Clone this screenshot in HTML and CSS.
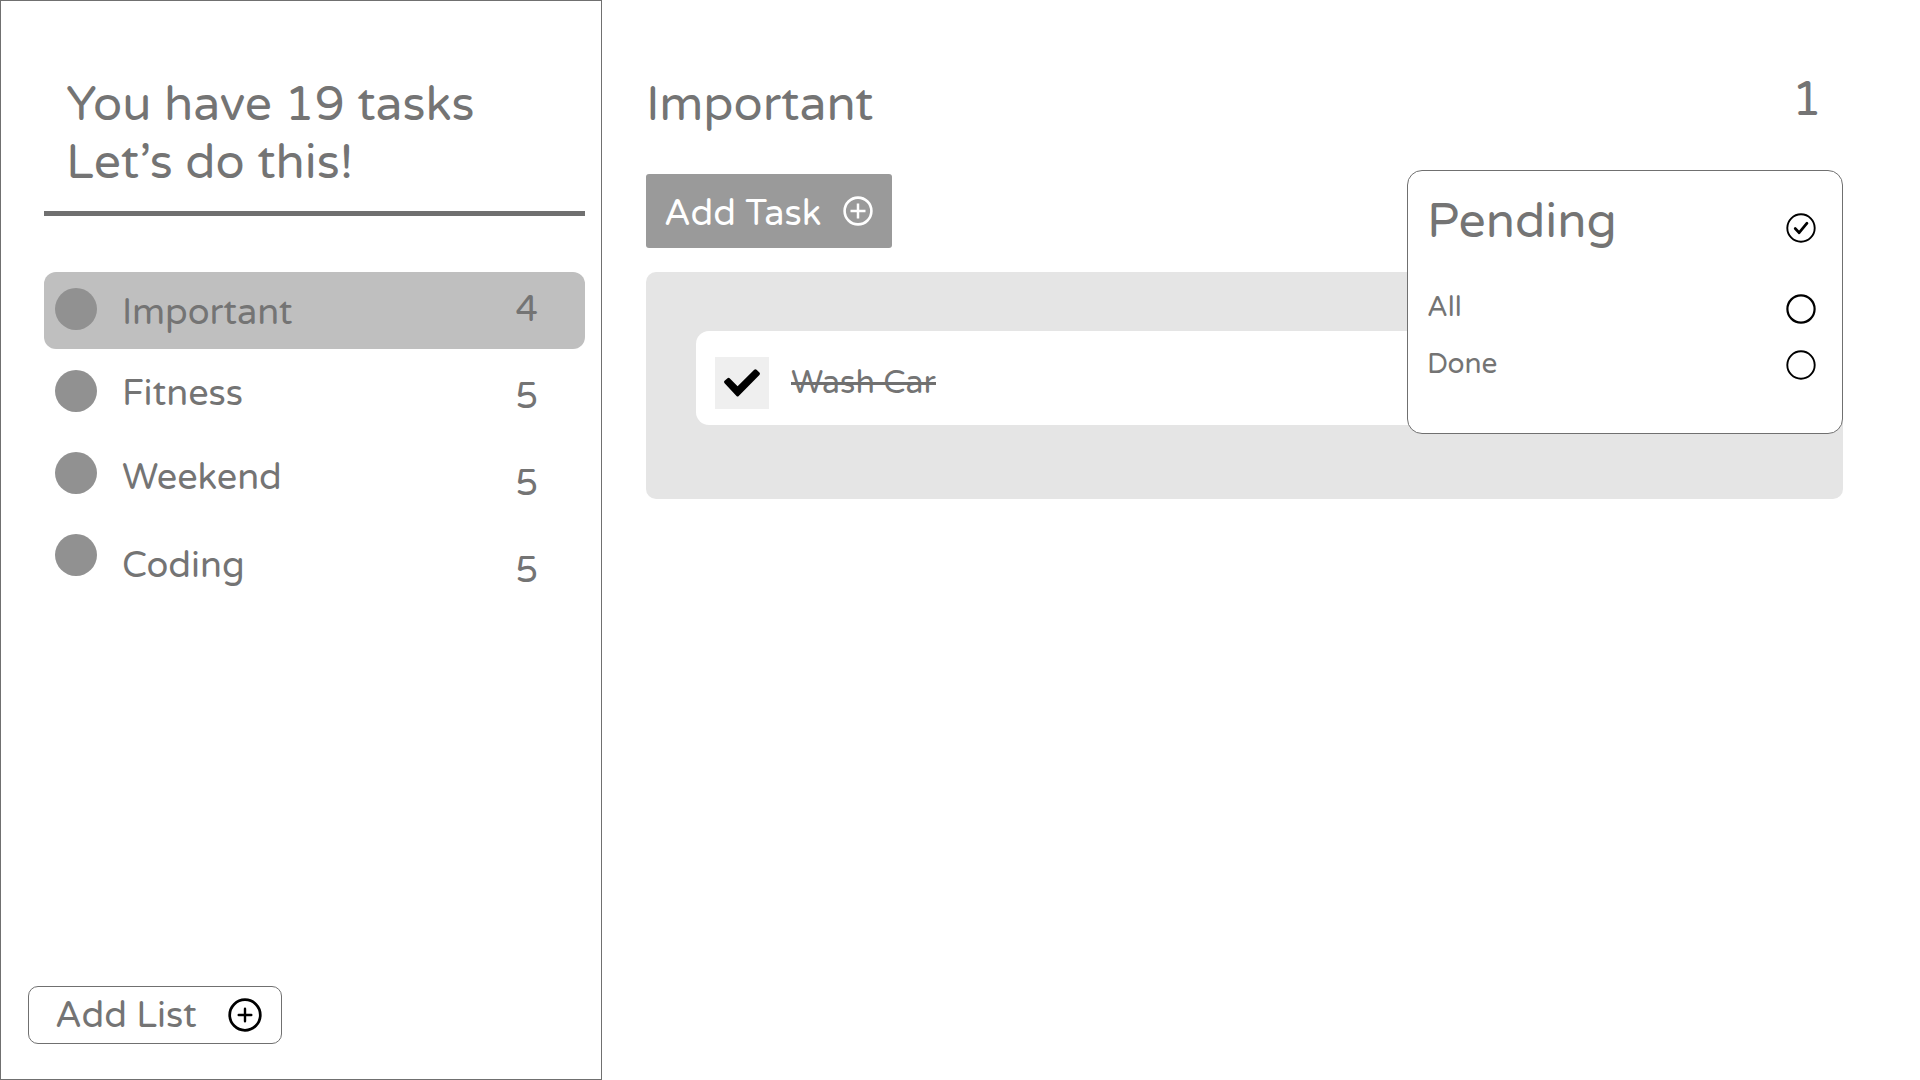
FILE: index.html
```html
<!DOCTYPE html>
<html lang="en">
<head>
<meta charset="utf-8">
<title>Tasks</title>
<link rel="stylesheet" href="styles.css">
</head>
<body>
<div class="app">
  <aside class="sidebar">
    <h1 class="greeting"><span>You have 19 tasks</span><br>Let’s do this!</h1>
    <ul class="lists">
      <li class="list selected"><span class="dot"></span><span class="name">Important</span><span class="count">4</span></li>
      <li class="list fitness"><span class="dot"></span><span class="name">Fitness</span><span class="count">5</span></li>
      <li class="list weekend"><span class="dot"></span><span class="name">Weekend</span><span class="count">5</span></li>
      <li class="list coding"><span class="dot"></span><span class="name">Coding</span><span class="count">5</span></li>
    </ul>
    <button class="add-list">
      <span>Add List</span>
      <svg width="34" height="34" viewBox="0 0 34 34" fill="none" stroke="currentColor" stroke-linecap="round">
        <circle cx="17" cy="17" r="15.3" stroke-width="2.7"/>
        <path d="M17 10.7v12.6M10.7 17h12.6" stroke-width="2.4"/>
      </svg>
    </button>
  </aside>
  <main class="main">
    <header class="header">
      <h2 class="title">Important</h2>
      <span class="total">1</span>
    </header>
    <button class="add-task">
      <span>Add Task</span>
      <svg width="30" height="30" viewBox="0 0 30 30" fill="none" stroke="currentColor">
        <circle cx="15" cy="15" r="13.4" stroke-width="2.6"/>
        <path d="M15 7.5v15M7.5 15h15" stroke-width="2.5"/>
      </svg>
    </button>
    <section class="tasks">
      <div class="task">
        <span class="check">
          <svg width="36" height="28" viewBox="0 0 36 28"><path d="M.6 14.2Q-.5 13 .6 11.8L3.5 9.3Q4.7 8.3 5.9 9.4L13.6 17.2 30.2.8Q31.4-.3 32.6.8L35.4 3.5Q36.5 4.7 35.4 5.9L14.7 26.9Q13.6 28 12.5 26.9Z"/></svg>
        </span>
        <span class="task-name">Wash Car</span>
      </div>
    </section>
    <div class="filter">
      <div class="option current"><span>Pending</span>
        <svg width="30" height="30" viewBox="0 0 30 30" fill="none" stroke="#000">
          <circle cx="15" cy="15" r="13.7" stroke-width="1.9"/>
          <path d="M9.2 15.5l4 4.2 7.8-9.5" stroke-width="2.7" stroke-linecap="round" stroke-linejoin="round"/>
        </svg>
      </div>
      <div class="option all"><span>All</span>
        <svg width="30" height="30" viewBox="0 0 30 30" fill="none" stroke="#000"><circle cx="15" cy="15" r="13.6" stroke-width="2.2"/></svg>
      </div>
      <div class="option done"><span>Done</span>
        <svg width="30" height="30" viewBox="0 0 30 30" fill="none" stroke="#000"><circle cx="15" cy="15" r="13.7" stroke-width="1.9"/></svg>
      </div>
    </div>
  </main>
</div>
</body>
</html>
```
FILE: styles.css
```css
* {
  box-sizing: border-box;
  margin: 0;
  padding: 0;
}

body {
  background: #fff;
  color: #747474;
  font-family: "Varela Round", "DejaVu Sans", sans-serif;
  font-size: 36px;
  line-height: 40px;
}

svg {
  display: block;
  flex: none;
}

button {
  font: inherit;
}

.app {
  display: flex;
  width: 1920px;
  height: 1080px;
  overflow: hidden;
}

/* Sidebar */
.sidebar {
  display: flex;
  flex-direction: column;
  width: 602px;
  height: 1080px;
  padding: 75px 16px 35px 27px;
  border: 1px solid #707070;
}

.greeting {
  height: 140px;
  margin-left: 16px;
  padding-left: 22px;
  border-bottom: 5px solid #707070;
  font-size: 48px;
  font-weight: 400;
  line-height: 58px;
  white-space: nowrap;
}

.lists {
  display: flex;
  flex-direction: column;
  gap: 5px;
  margin: 56px 0 0 16px;
  list-style: none;
}

.list {
  display: flex;
  align-items: flex-start;
  height: 77px;
  padding: 0 47px 0 11px;
  border-radius: 12px;
}

.list.selected {
  background: #bfbfbf;
}

.dot {
  width: 42px;
  height: 42px;
  margin: 16px 25px 0 0;
  border-radius: 50%;
  background: #919191;
}

.name {
  flex: 1;
  margin-top: 20px;
}

.count {
  margin-top: 18px;
}

.selected .name { margin-top: 21px; }
.fitness .count { margin-top: 23px; }
.weekend .name { margin-top: 22px; }
.weekend .count { margin-top: 28px; }
.coding .name { margin-top: 28px; }
.coding .count { margin-top: 33px; }

.add-list {
  display: flex;
  align-items: center;
  justify-content: space-between;
  width: 254px;
  height: 58px;
  margin-top: auto;
  padding: 0 19px 0 26px;
  border: 1px solid #707070;
  border-radius: 10px;
  background: #fff;
  color: #747474;
}

.add-list span {
  padding-top: 2px;
}

.add-list svg {
  color: #000;
}

/* Main column */
.main {
  position: relative;
  flex: 1;
  padding: 76px 77px 0 44px;
}

.header {
  display: flex;
  justify-content: space-between;
  height: 98px;
  padding-right: 21px;
  font-size: 48px;
  line-height: 58px;
}

.title {
  font-size: inherit;
  font-weight: 400;
}

.total {
  margin-top: -5px;
}

.add-task {
  display: flex;
  align-items: flex-start;
  justify-content: space-between;
  width: 246px;
  height: 74px;
  padding: 20px 19px 0 18px;
  border: 0;
  border-radius: 3px;
  background: #9a9a9a;
  color: #fff;
}

.add-task svg {
  margin-top: 2px;
}

.tasks {
  height: 227px;
  margin-top: 24px;
  padding: 59px 50px;
  border-radius: 10px;
  background: #e5e5e5;
}

.task {
  display: flex;
  align-items: flex-start;
  height: 94px;
  padding: 26px 19px 0;
  border-radius: 13px;
  background: #fff;
}

.check {
  display: flex;
  align-items: center;
  justify-content: center;
  width: 54px;
  height: 52px;
  margin-right: 22px;
  background: #efefef;
}

.task-name {
  position: relative;
  margin-top: 9px;
  font-size: 32px;
  line-height: 35px;
}

.task-name::after {
  content: "";
  position: absolute;
  left: 0;
  right: 0;
  top: 16px;
  height: 3px;
  background: #707070;
}

/* Filter menu, laid over the task panel */
.filter {
  position: absolute;
  top: 170px;
  right: 77px;
  width: 436px;
  height: 264px;
  padding: 22px 26px 0 19px;
  border: 1px solid #707070;
  border-radius: 15px;
  background: #fff;
  font-size: 28px;
  line-height: 31px;
}

.option {
  display: flex;
  align-items: flex-start;
  justify-content: space-between;
}

.current {
  height: 99px;
  font-size: 48px;
  line-height: 58px;
}

.current svg {
  margin-top: 20px;
}

.all {
  height: 57px;
}

.all svg {
  margin-top: 2px;
}

.done svg {
  margin-top: 1px;
}
```
